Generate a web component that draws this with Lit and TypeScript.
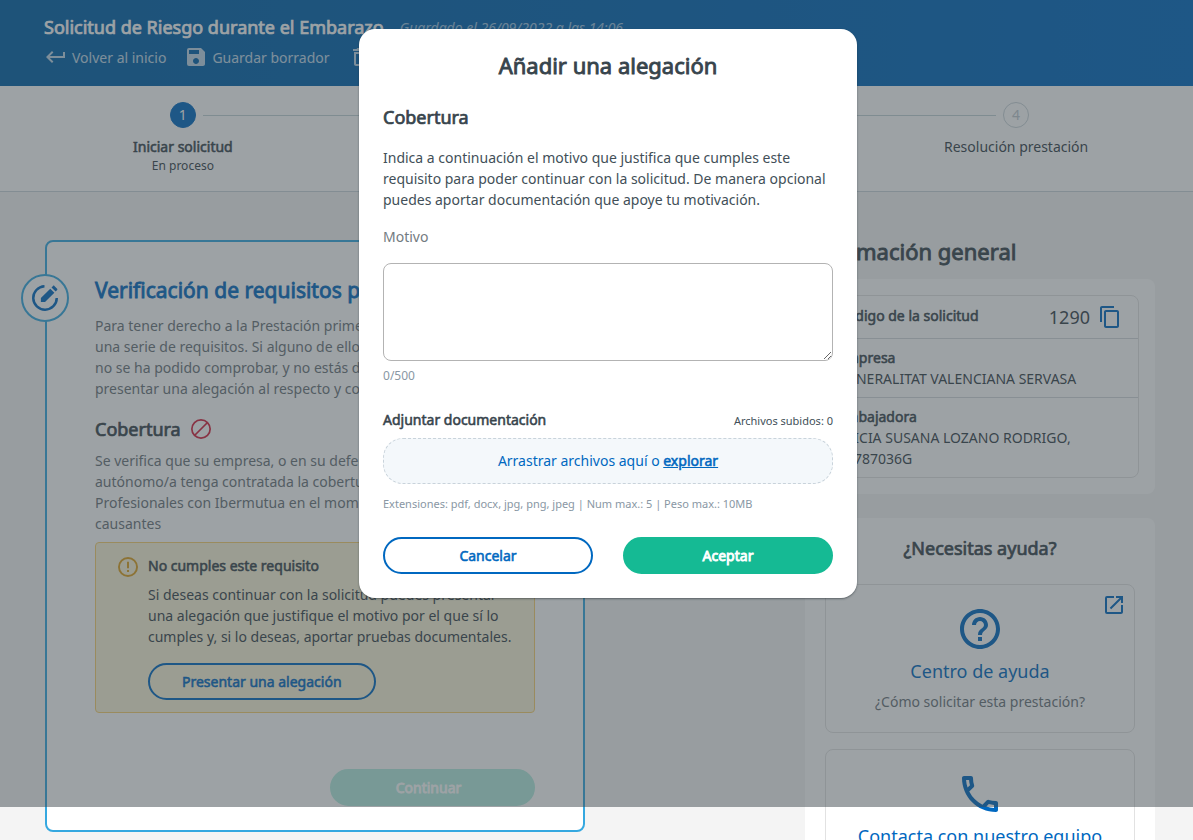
import { LitElement, html, css, svg, nothing } from "lit";
import { customElement, property, state } from "lit/decorators.js";
import { classMap } from "lit/directives/class-map.js";

const PATHS = {
  back: "M19 7v4H5.83l3.58-3.59L8 6l-6 6 6 6 1.41-1.41L5.83 13H21V7z",
  save: "M17 3H5a2 2 0 0 0-2 2v14a2 2 0 0 0 2 2h14c1.1 0 2-.9 2-2V7l-4-4zm-5 16c-1.66 0-3-1.34-3-3s1.34-3 3-3 3 1.34 3 3-1.34 3-3 3zm3-10H5V5h10v4z",
  trash: "M6 19c0 1.1.9 2 2 2h8c1.1 0 2-.9 2-2V7H6v12zM8 9h8v10H8V9zm7.5-5l-1-1h-5l-1 1H5v2h14V4z",
  copy: "M16 1H4c-1.100 0-2 .9-2 2v14h2V3h12V1zm3 4H8c-1.100 0-2 .9-2 2v14c0 1.100.9 2 2 2h11c1.100 0 2-.9 2-2V7c0-1.100-.9-2-2-2zm0 16H8V7h11v14z",
  open: "M19 19H5V5h7V3H5a2 2 0 0 0-2 2v14a2 2 0 0 0 2 2h14c1.100 0 2-.9 2-2v-7h-2v7zM14 3v2h3.590l-9.830 9.830 1.410 1.410L19 6.410V10h2V3h-7z",
  help: "M11 18h2v-2h-2v2zm1-16C6.480 2 2 6.480 2 12s4.480 10 10 10 10-4.480 10-10S17.520 2 12 2zm0 18c-4.410 0-8-3.590-8-8s3.590-8 8-8 8 3.590 8 8-3.590 8-8 8zm0-14c-2.210 0-4 1.790-4 4h2c0-1.100.9-2 2-2s2 .9 2 2c0 2-3 1.750-3 5h2c0-2.250 3-2.500 3-5 0-2.210-1.790-4-4-4z",
  phone: "M6.540 5c.06.890.210 1.760.450 2.590l-1.200 1.200c-.410-1.200-.670-2.470-.760-3.790h1.510m9.860 12.020c.850.240 1.720.390 2.600.450v1.490c-1.320-.09-2.590-.350-3.800-.750l1.200-1.190M7.500 3H4c-.550 0-1 .450-1 1 0 9.390 7.610 17 17 17 .550 0 1-.450 1-1v-3.490c0-.550-.450-1-1-1-1.240 0-2.450-.2-3.570-.570a.84.84 0 0 0-.310-.050c-.260 0-.510.1-.710.290l-2.200 2.200a15.150 15.150 0 0 1-6.590-6.590l2.200-2.200c.280-.280.360-.670.250-1.020A11.360 11.360 0 0 1 8.500 4c0-.550-.450-1-1-1z",
};

type IconName = keyof typeof PATHS | "edit" | "ban" | "warn";

@customElement("app-icon")
export class AppIcon extends LitElement {
  @property() name: IconName = "save";

  static styles = css`
    :host { display: block; flex: none; width: 24px; height: 24px; }
    svg { display: block; width: 100%; height: 100%; fill: currentColor; }
    .line { fill: none; stroke: currentColor; }
  `;

  private shape() {
    switch (this.name) {
      case "edit":
        return svg`
          <path class="line" stroke-width="2" d="M11.600 2.600A9.400 9.400 0 1 0 21.400 12"/>
          <path d="M8.700 15.200v-3.300l7.500-7.400 3.300 3.300-7.500 7.400zM17.200 3.500l1.200-1.200c.3-.3.800-.3 1.100 0l2.200 2.200c.3.3.3.800 0 1.100l-1.200 1.200z"/>`;
      case "ban":
        return svg`
          <circle class="line" stroke-width="1.700" cx="12" cy="12" r="9.150"/>
          <path class="line" stroke-width="1.700" d="M5.500 18.500l13-13"/>`;
      case "warn":
        return svg`
          <circle class="line" stroke-width="1.900" cx="12" cy="12" r="9.050"/>
          <path d="M11 6.800h2v6.400h-2zM11 15h2v2h-2z"/>`;
      default:
        return svg`<path d=${PATHS[this.name]}/>`;
    }
  }

  render() {
    return html`<svg viewBox="0 0 24 24" aria-hidden="true">${this.shape()}</svg>`;
  }
}

const shared = css`
  * { box-sizing: border-box; }
  h1, h2, h3, h4, p, ul, ol, dl, dd { margin: 0; padding: 0; font-size: inherit; font-weight: 400; }
  ul, ol { list-style: none; }
  a { color: inherit; text-decoration: none; }
  .strong { font-weight: 400; -webkit-text-stroke: 0.04em currentColor; }
  .btn {
    height: 37px;
    border: 2px solid #0068c0;
    border-radius: 19px;
    background: transparent;
    color: #0068c0;
    font: inherit;
    line-height: 21px;
    padding: 0 32px;
    cursor: pointer;
  }
  .btn.primary {
    background: #15ba94;
    border-color: #15ba94;
    color: #fff;
    -webkit-text-stroke-width: 0.06em;
  }
  .btn.primary:disabled { background: #b4ede0; border-color: #b4ede0; color: #fff; }
`;

@customElement("claim-dialog")
export class ClaimDialog extends LitElement {
  @state() private text = "";

  static styles = [shared, css`
    :host { display: block; width: 498px; max-width: 100%; }
    .dialog {
      padding: 16px 24px 24px;
      border-radius: 16px;
      background: #fff;
      color: #37444c;
      box-shadow: 0 1px 2px rgba(30, 40, 46, 0.5);
    }
    .title { font-size: 22px; line-height: 40px; text-align: center; }
    .subtitle { font-size: 18px; line-height: 24px; margin-top: 20px; }
    .lead { margin-top: 18px; color: #424f58; }
    .label { display: block; margin-top: 16px; color: #737b81; }
    .area {
      display: block;
      width: 100%;
      height: 98px;
      margin-top: 16px;
      padding: 8px;
      border: 1px solid #b3b3b3;
      border-radius: 8px;
      background: #fff;
      color: inherit;
      font: inherit;
      resize: vertical;
      outline: none;
    }
    .count { margin-top: 6px; font-size: 12px; line-height: 18px; color: #8997a4; }
    .row { display: flex; justify-content: space-between; align-items: baseline; margin-top: 24px; }
    .files { font-size: 11px; color: #424f58; }
    .drop {
      display: flex;
      justify-content: center;
      align-items: flex-start;
      height: 46px;
      margin-top: 7px;
      padding-top: 11px;
      border: 1px dashed #c9d3db;
      border-radius: 20px;
      background: #f4f8fb;
      color: #0068c0;
      white-space: pre;
    }
    .browse { text-decoration: underline; }
    .hint { margin-top: 12px; font-size: 11px; line-height: 16px; color: #8997a4; }
    .actions { display: grid; grid-template-columns: 1fr 1fr; gap: 30px; margin-top: 25px; }
  `];

  render() {
    return html`
      <section class="dialog" role="dialog" aria-modal="true" aria-labelledby="title">
        <h2 class="title strong" id="title">Añadir una alegación</h2>
        <h3 class="subtitle strong">Cobertura</h3>
        <p class="lead">Indica a continuación el motivo que justifica que cumples este requisito para poder continuar con la solicitud. De manera opcional puedes aportar documentación que apoye tu motivación.</p>
        <label class="label" for="reason">Motivo</label>
        <textarea class="area" id="reason" maxlength="500" .value=${this.text}
          @input=${(e: Event) => (this.text = (e.target as HTMLTextAreaElement).value)}></textarea>
        <p class="count">${this.text.length}/500</p>
        <div class="row">
          <h4 class="strong">Adjuntar documentación</h4>
          <span class="files">Archivos subidos: 0</span>
        </div>
        <div class="drop">Arrastrar archivos aquí o <a class="browse strong" href="#">explorar</a></div>
        <p class="hint">Extensiones: pdf, docx, jpg, png, jpeg | Num max.: 5 | Peso max.: 10MB</p>
        <div class="actions">
          <button class="btn strong" type="button">Cancelar</button>
          <button class="btn primary strong" type="button">Aceptar</button>
        </div>
      </section>`;
  }
}

interface Step { label: string; status?: string; active?: boolean; }

@customElement("app-root")
export class AppRoot extends LitElement {
  private steps: Step[] = [
    { label: "Iniciar solicitud", status: "En proceso", active: true },
    { label: "Aportar documentación" },
    { label: "Revisión solicitud" },
    { label: "Resolución prestación" },
  ];

  static styles = [shared, css`
    :host {
      display: block;
      position: relative;
      height: 100vh;
      overflow: hidden;
      background: #f4f4f4;
      color: #37444c;
      font: 14px/21px "Noto Sans", sans-serif;
    }
    .top {
      height: 86px;
      padding: 14px 38px 0 44px;
      background: linear-gradient(90deg, #0060a6, #0068c0);
      color: #fff;
    }
    .heading { display: flex; align-items: center; gap: 16px; height: 26px; }
    .name { font-size: 18px; }
    .saved { font-style: italic; opacity: 0.6; }
    .tools { display: flex; gap: 18px; margin-top: 5px; opacity: 0.75; }
    .tool { display: flex; align-items: center; gap: 4px; height: 24px; }
    .steps {
      display: grid;
      grid-template-columns: repeat(4, 1fr);
      height: 106px;
      padding: 16px 38px 0 44px;
      background: #fff;
      border-bottom: 1px solid #cbd5da;
      text-align: center;
    }
    .track { display: flex; align-items: center; gap: 7px; margin-bottom: 8px; }
    .track::before, .track::after { content: ""; flex: 1; height: 1px; background: #c3d2d6; }
    .step:first-child .track::before, .step:last-child .track::after { background: none; }
    .dot {
      width: 26px;
      height: 26px;
      border: 1px solid #c9d3d8;
      border-radius: 50%;
      line-height: 24px;
      color: #c0c9cf;
    }
    .dot.active { background: #0068c0; border-color: #0068c0; color: #fff; }
    .status { font-size: 12px; line-height: 18px; }
    .page {
      display: grid;
      grid-template-columns: minmax(0, 540px) 350px;
      justify-content: space-between;
      align-items: start;
      padding: 48px 38px 0 45px;
    }
    .card {
      position: relative;
      padding: 32px 48px 24px;
      border: 2px solid #35a8e0;
      border-radius: 8px;
      background: #fff;
    }
    .badge {
      position: absolute;
      top: 32px;
      left: -26px;
      display: grid;
      place-items: center;
      width: 48px;
      height: 48px;
      border: 2px solid #35a8e0;
      border-radius: 50%;
      background: #fff;
      color: #0068c0;
    }
    .badge app-icon { width: 30px; height: 30px; }
    .card-title { font-size: 21px; line-height: 33px; color: #0068c0; }
    .muted { color: #6b747a; }
    .card-text { margin-top: 8px; }
    .requirement { display: flex; align-items: center; gap: 8px; height: 24px; margin: 18px 0 9px; font-size: 18px; }
    .ban { color: #d4213d; }
    .alert {
      display: flex;
      gap: 8px;
      margin-top: 8px;
      padding: 12px 20px 12px;
      border: 1px solid #f8d170;
      border-radius: 4px;
      background: #fbf4d8;
    }
    .warn { color: #dda01f; }
    .alert-text { margin: 8px 0 16px; }
    .footer { display: flex; justify-content: flex-end; margin-top: 56px; }
    .next { width: 205px; padding: 0 40px 0 32px; }
    .side-title { font-size: 22px; line-height: 22px; }
    .panel { margin-top: 17px; padding: 16px; border-radius: 8px; background: #fff; }
    .facts { border: 1px solid #e2e2e2; border-radius: 8px; }
    .fact { padding: 8px 16px; }
    .fact + .fact { border-top: 1px solid #d5d9dc; }
    .code { display: flex; align-items: center; gap: 8px; height: 42px; }
    .code dt { flex: 1; padding-bottom: 4px; }
    .code dd { font-size: 18px; }
    .copy { padding: 0; border: 0; background: none; color: #0068c0; }
    .help { margin-top: 24px; padding: 18px 20px; text-align: center; }
    .help-title { font-size: 18px; line-height: 24px; margin-bottom: 24px; }
    .link {
      position: relative;
      display: flex;
      flex-direction: column;
      align-items: center;
      height: 149px;
      margin-bottom: 16px;
      padding-top: 20px;
      border: 1px solid #e2e2e2;
      border-radius: 8px;
    }
    .link .big { width: 48px; height: 48px; color: #0068c0; }
    .link-title { margin: 6px 0 8px; font-size: 18px; line-height: 24px; color: #0068c0; }
    .corner { position: absolute; top: 8px; right: 8px; color: #0068c0; }
    .overlay {
      position: absolute;
      inset: 0 0 33px 0;
      display: flex;
      justify-content: center;
      align-items: flex-start;
      padding: 29px 0 0 23px;
      background: rgba(59, 69, 75, 0.5);
    }
  `];

  private renderStep(step: Step, index: number) {
    return html`
      <li class="step">
        <div class="track"><span class=${classMap({ dot: true, active: !!step.active })}>${index + 1}</span></div>
        <div class=${classMap({ strong: !!step.active })}>${step.label}</div>
        ${step.status ? html`<div class="status">${step.status}</div>` : nothing}
      </li>`;
  }

  render() {
    return html`
      <header class="top">
        <div class="heading">
          <h1 class="name strong">Solicitud de Riesgo durante el Embarazo</h1>
          <span class="saved">Guardado el 26/09/2022 a las 14:06</span>
        </div>
        <nav class="tools">
          <a class="tool" href="#"><app-icon name="back"></app-icon>Volver al inicio</a>
          <a class="tool" href="#"><app-icon name="save"></app-icon>Guardar borrador</a>
          <a class="tool" href="#"><app-icon name="trash"></app-icon>Eliminar borrador</a>
        </nav>
      </header>
      <ol class="steps">${this.steps.map((s, i) => this.renderStep(s, i))}</ol>
      <main class="page">
        <section class="card">
          <span class="badge"><app-icon name="edit"></app-icon></span>
          <h2 class="card-title strong">Verificación de requisitos previos</h2>
          <p class="card-text muted">Para tener derecho a la Prestación primero debes cumplir<br>una serie de requisitos. Si alguno de ellos no se cumple o<br>no se ha podido comprobar, y no estás de acuerdo, puedes<br>presentar una alegación al respecto y continuar.</p>
          <h3 class="requirement"><span class="strong">Cobertura</span><app-icon class="ban" name="ban"></app-icon></h3>
          <p class="muted">Se verifica que su empresa, o en su defecto el trabajador<br>autónomo/a tenga contratada la cobertura de Contingencias<br>Profesionales con Ibermutua en el momento de los hechos<br>causantes</p>
          <div class="alert">
            <app-icon class="warn" name="warn"></app-icon>
            <div>
              <h4 class="strong">No cumples este requisito</h4>
              <p class="alert-text">Si deseas continuar con la solicitud puedes presentar una alegación que justifique el motivo por el que sí lo cumples y, si lo deseas, aportar pruebas documentales.</p>
              <button class="btn strong" type="button">Presentar una alegación</button>
            </div>
          </div>
          <div class="footer"><button class="btn primary next strong" type="button" disabled>Continuar</button></div>
        </section>
        <aside>
          <h2 class="side-title strong">Información general</h2>
          <div class="panel">
            <dl class="facts">
              <div class="fact code">
                <dt class="strong">Código de la solicitud</dt>
                <dd>1290</dd>
                <button class="copy" type="button" aria-label="Copiar código"><app-icon name="copy"></app-icon></button>
              </div>
              <div class="fact"><dt class="strong">Empresa</dt><dd>GENERALITAT VALENCIANA SERVASA</dd></div>
              <div class="fact"><dt class="strong">Trabajadora</dt><dd>ALICIA SUSANA LOZANO RODRIGO, 24787036G</dd></div>
            </dl>
          </div>
          <div class="panel help">
            <h3 class="help-title strong">¿Necesitas ayuda?</h3>
            <a class="link" href="#">
              <app-icon class="corner" name="open"></app-icon>
              <app-icon class="big" name="help"></app-icon>
              <span class="link-title">Centro de ayuda</span>
              <span class="muted">¿Cómo solicitar esta prestación?</span>
            </a>
            <a class="link" href="#">
              <app-icon class="big" name="phone"></app-icon>
              <span class="link-title">Contacta con nuestro equipo</span>
            </a>
          </div>
        </aside>
      </main>
      <div class="overlay"><claim-dialog></claim-dialog></div>`;
  }
}
